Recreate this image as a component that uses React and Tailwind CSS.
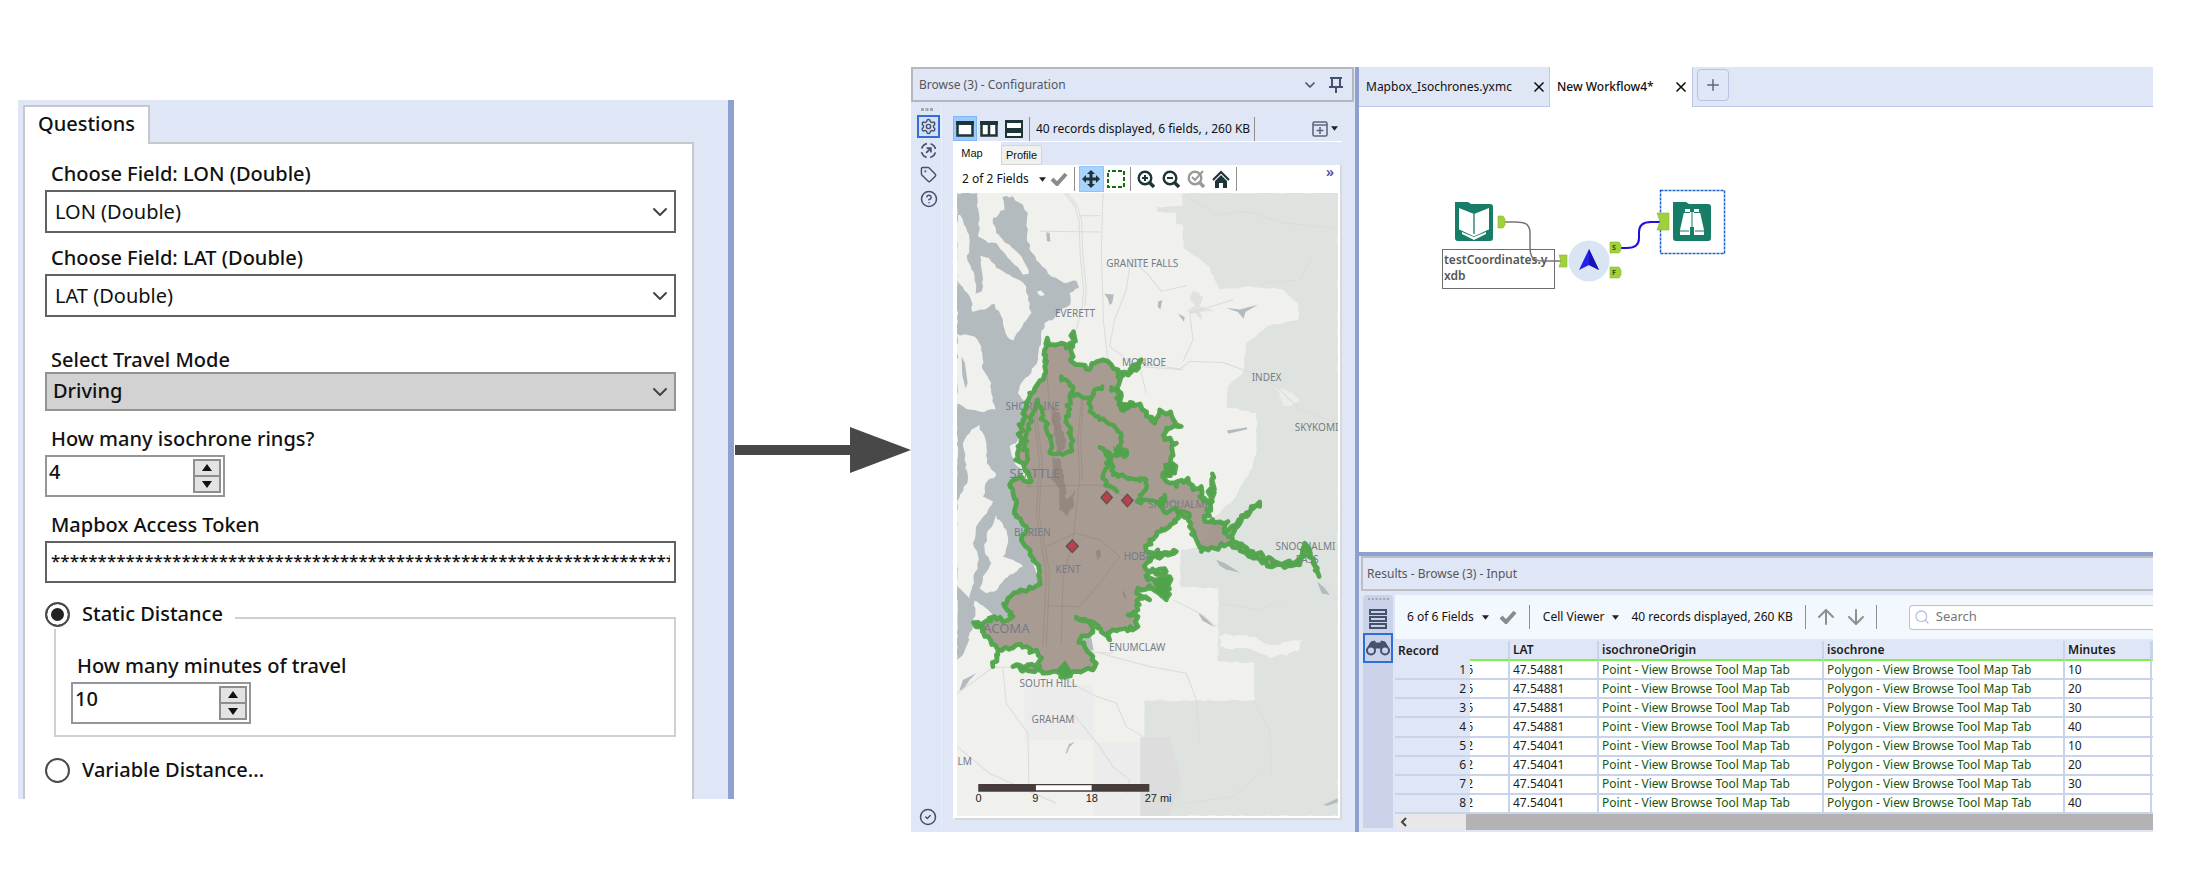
import React, { useState } from 'react'
import { ChevronDown, Settings, Tag, CircleHelp, CircleCheck, ArrowUp, ArrowDown, Search, Plus, X } from 'lucide-react'

const rows = [
  { rec: 1, clip: '6', lat: '47.54881', min: 10 },
  { rec: 2, clip: '6', lat: '47.54881', min: 20 },
  { rec: 3, clip: '6', lat: '47.54881', min: 30 },
  { rec: 4, clip: '6', lat: '47.54881', min: 40 },
  { rec: 5, clip: '2', lat: '47.54041', min: 10 },
  { rec: 6, clip: '2', lat: '47.54041', min: 20 },
  { rec: 7, clip: '2', lat: '47.54041', min: 30 },
  { rec: 8, clip: '2', lat: '47.54041', min: 40 },
]

// adds a repeatable wobble to a coarse outline so coasts and rings look ragged
function rough(str, amp = 5, step = 13, close = true){
  const pts = str.trim().split(/\s+/).map(p => p.split(',').map(Number))
  if (close) pts.push(pts[0])
  let seed = 7
  const rnd = () => {
    seed = (seed * 16807) % 2147483647
    return seed / 2147483647 - 0.5
  }
  let d = `M${pts[0][0]} ${pts[0][1]}`
  for (let i = 1; i < pts.length; i++){
    const [x0, y0] = pts[i - 1]
    const [x1, y1] = pts[i]
    const n = Math.max(1, Math.round(Math.hypot(x1 - x0, y1 - y0) / step))
    for (let k = 1; k <= n; k++){
      const t = k / n
      const a = k === n ? 0 : amp * 2
      d += `L${(x0 + (x1 - x0) * t + rnd() * a).toFixed(1)} ${(y0 + (y1 - y0) * t + rnd() * a).toFixed(1)}`
    }
  }
  return close ? d + 'Z' : d
}

const WATER = '172,40 232,40 232,80 240,120 235,170 265,190 290,190 325,235 355,262 370,285 388,282 370,240 330,195 290,160 280,115 315,90 308,52 340,50 370,75 385,100 383,160 390,210 420,250 455,290 500,310 530,303 538,325 510,340 512,375 480,395 465,415 435,430 425,480 415,540 395,580 365,610 355,640 385,680 375,740 355,780 330,800 345,850 370,880 335,905 330,930 350,975 350,1010 380,1040 365,1080 395,1130 410,1180 415,1215 375,1240 325,1255 312,1280 340,1310 310,1318 280,1305 245,1275 225,1262 228,1310 218,1350 190,1425 172,1440'
const ISLANDS = [
  '172,88 190,120 210,180 203,240 225,290 228,342 246,335 250,300 242,228 268,235 290,265 330,285 380,320 385,360 396,400 372,430 342,482 318,460 310,420 285,373 240,390 218,396 215,362 190,322 172,302',
  '172,462 225,470 245,500 250,570 275,610 275,640 288,690 240,695 200,688 172,670',
  '240,735 258,780 262,850 290,885 262,905 250,950 280,965 262,1000 230,1040 220,1090 238,1140 222,1200 210,1255 190,1235 172,1215 172,965 205,900 195,840 190,790 215,750',
  '290,1005 320,1050 325,1090 310,1130 340,1140 370,1160 330,1185 300,1215 285,1235 260,1240 240,1225 250,1190 275,1150 255,1110 262,1060',
  '412,335 425,332 436,346 424,349',
  '232,1262 280,1305 262,1330 222,1328',
]
const FOREST = '850,40 1315,40 1315,1908 722,1908 722,1672 733,1672 733,1562 1065,1562 1065,1448 955,1445 955,1225 843,1221 843,1110 905,1100 945,1010 1000,960 1050,875 1070,820 1070,700 980,682 985,620 1030,580 1040,490 1100,440 1195,420 1195,370 1150,330 1040,320 960,330 930,262 850,205 850,135 830,132 828,98 772,96 772,82 850,78'
const RING = '443,475 450,495 485,490 500,505 515,490 522,456 520,500 512,540 530,555 560,568 585,550 610,540 635,555 655,580 690,580 725,540 690,582 655,592 665,650 665,690 700,670 730,690 765,730 780,690 815,705 830,740 845,740 800,745 795,780 830,790 815,830 825,880 790,880 800,905 830,920 865,895 880,930 905,920 900,950 925,968 938,882 938,965 915,1025 985,1025 975,1060 1020,1018 1080,967 1025,1022 985,1070 1000,1085 1060,1115 1120,1150 1190,1145 1215,1090 1240,1140 1258,1190 1240,1145 1215,1105 1200,1155 1120,1160 1060,1135 990,1090 905,1115 890,1080 865,1015 835,1000 810,1040 750,1080 740,1115 790,1120 830,1115 770,1130 740,1150 740,1170 800,1175 745,1185 745,1200 810,1190 800,1260 760,1225 715,1225 720,1245 750,1260 720,1255 715,1290 685,1305 715,1310 715,1340 690,1350 625,1360 630,1380 585,1330 530,1312 575,1325 575,1360 540,1380 555,1400 590,1450 580,1470 540,1475 500,1490 460,1475 430,1480 340,1460 420,1460 420,1430 380,1400 350,1395 295,1410 280,1460 295,1410 265,1370 245,1340 222,1328 250,1330 285,1310 310,1325 340,1310 315,1280 325,1255 415,1215 410,1150 365,1080 380,1040 350,1005 350,960 330,915 365,890 395,905 370,850 348,840 355,800 370,720 390,640 430,600 435,560 435,510'
const INNER = [
  '485,590 520,620 510,650 500,720 515,770 515,815 490,825 450,820 455,770 430,720 415,660 400,700 375,800 380,850',
  '520,640 545,650 575,655 585,630 608,620',
  '575,655 570,695 600,720 640,735 665,770 655,800 682,825 635,828 600,802 632,840 612,880 617,915 652,935',
  '635,622 665,640 650,655 668,690',
  '635,835 640,885 690,895 740,900 732,935 712,965 760,962 800,1000 830,985 870,1010',
  '780,975 795,945 790,975',
]
const ROADS = [
  'M495 40L525 80L538 120L542 230L552 330L548 380L535 430L530 450',
  'M503 40L533 80L546 120L550 230L560 330L556 380',
  'M610 40L605 220L612 430L625 540',
  'M420 155L605 157', 'M538 108L603 108',
  'M692 235L745 285L785 335L860 318M692 250L680 330L645 420L630 500L690 545L840 568L870 545L970 548L1045 575L1130 620L1200 690L1315 730',
  'M860 50L950 105L1040 95L1150 130L1315 145', 'M1235 240L1200 300L1090 310',
  'M440 560L450 680L475 760', 'M545 660L535 780L540 900L520 1080L490 1200L485 1390',
  'M550 660L543 780L548 900', 'M400 680L420 850L410 1000L440 1180L430 1400',
  'M408 680L428 850L418 1000L450 1180L440 1400',
  'M380 920L600 915L700 960L850 970', 'M440 1100L530 1060L600 1080L660 1130L600 1210L540 1280L440 1278',
  'M172 1540L230 1500L280 1462L420 1462', 'M310 1465L320 1570L385 1660L388 1820',
  'M172 1700L270 1780L380 1830L470 1870', 'M500 1500L580 1545L650 1570L680 1640L730 1670',
  'M520 1600L600 1700L640 1760L690 1800L680 1840', 'M600 1420L750 1460L860 1480L890 1560L900 1700',
  'M820 1260L900 1300L950 1340', 'M1060 1560L1110 1650L1115 1780', 'M850 570L720 560L740 640',
  'M1000 360L870 400L880 480L850 545', 'M430 1400L520 1412L640 1420',
  'M960 1270L1080 1290L1150 1260', 'M1258 1195L1315 1260', 'M740 1800L860 1870L1000 1850L1080 1780',
]
const PLACES = [
  ['GRANITE FALLS', 620, 261, 30], ['EVERETT', 466, 411, 30], ['MONROE', 667, 560, 30],
  ['INDEX', 1056, 605, 30], ['SHORELINE', 318, 692, 30], ['SKYKOMI', 1185, 753, 30],
  ['SEATTLE', 330, 894, 39], ['SNOQUALMIE', 745, 986, 30], ['BURIEN', 343, 1068, 30],
  ['SNOQUALMI', 1127, 1111, 30], ['PASS', 1188, 1148, 30], ['HOBART', 672, 1140, 30],
  ['KENT', 468, 1179, 30], ['TACOMA', 232, 1358, 39], ['ENUMCLAW', 628, 1413, 30],
  ['SOUTH HILL', 360, 1522, 30], ['GRAHAM', 396, 1628, 30], ['LM', 174, 1755, 30],
]

function MapView(){
  return (
    <svg viewBox="172 40 1143 1868" preserveAspectRatio="xMidYMid slice" className="block w-full h-[623px] bg-[#f0f0ed]">
      <path d={rough(FOREST, 3, 14)} fill="#dfe3df" />
      <path d="M375 1515h207v165H375zM582 1685h141v223H582z" fill="#ececed" />
      <path d="M722 1672h90l15 70l20 60l-40 106H722z" fill="#dcdddc" />
      <path d={rough('955,1365 1040,1365 1110,1395 1210,1380 1195,1415 1110,1435 1060,1410 960,1400', 6, 12)} fill="#f0f0ed" />
      <path d={rough('1130,620 1180,640 1200,668 1150,680', 5, 10)} fill="#ecedea" />
      <path d={rough(WATER, 4, 12)} fill="#b3bbbf" />
      <path d={rough('172,680 215,700 245,695 290,700 240,740 205,765 190,790 172,740', 3, 12)} fill="#b3bbbf" />
      {ISLANDS.map(p => <path key={p} d={rough(p, 4, 12)} fill="#f0f0ed" />)}
      <g fill="#b3bbbf">
        <path d="M186 530l10 20l8 60l-6 16l-10-40zM614 342l28 2l-4 26l-8 6l-6-20zM440 158l10 2l2 26l-10-2zM980 385l40 4l55-14l-38 22l-5 20l-18-20zM776 365l12-4l-6 28l-8-8zM835 402l20 10l-2 14zM982 752l60-10v6l-56 14z" />
        <path d="M950 1140l26 10l44 28l-40-8l-20-12zM896 1300l18 8l30 34l-36-20zM1252 1205l24 20l14 20l-24-4zM498 1720l10-28l18-6l-16 14l-8 20zM1270 1875l44-20v12l-30 10zM190 1500l40-20l-20 20l-20 30l-10 0zM544 1370l30 0l8 40l-20 6l-18-20z" />
      </g>
      <path d={rough('880,330 910,350 900,380 940,390 900,400 905,420 880,400 860,395 885,380 870,355', 4, 8)} fill="#e0e2e1" />
      <g fill="none" stroke="#dadcdc" strokeWidth="3" strokeLinejoin="round">
        {ROADS.map(d => <path key={d} d={d} />)}
      </g>
      <path d={rough(RING, 8, 10)} fill="#9c8d82" fillOpacity="0.86" />
      <g fill="#82786f" opacity="0.5">
        <path d={rough('462,680 480,700 485,750 500,780 490,812 470,815 468,775 455,720', 4, 12)} />
        <path d={rough('458,830 480,835 490,880 500,960 525,930 520,985 500,1010 478,990 480,930 455,900', 4, 12)} />
        <path d="M588 1115l12-8l4 20l-10 14zM668 1230l8 10l4 20l-10-14z" />
      </g>
      <g fill="none" stroke="#85796f" strokeWidth="2" strokeLinejoin="round" opacity="0.4">
        {ROADS.slice(8, 15).map(d => <path key={d} d={d} />)}
      </g>
      <g fontFamily="'Noto Sans', sans-serif" fill="#747c87">
        {PLACES.map(([t, x, y, s]) => <text key={t + x} x={x} y={y} fontSize={s}>{t}</text>)}
      </g>
      <g fill="none" stroke="#4fa34a" strokeOpacity="0.95" strokeLinejoin="round" strokeLinecap="round">
        <path d={rough(RING, 8, 10)} strokeWidth="14" />
        {INNER.map(p => <path key={p} d={rough(p, 7, 9, false)} strokeWidth="13" />)}
      </g>
      <g fill="#4fa34a">
        <path d="M755 1200l55-10l-8 66l-20-8zM640 800l44 22l-36 14zM790 850l34-4l4 36l-34 4zM655 665l60 6l-45 30zM470 1470l26-28l22 32l-22 20z" />
      </g>
      <g fill="#b9414d" stroke="#5c5250" strokeWidth="4">
        <path d="M621 934l17 19l-17 19l-17-19z" />
        <path d="M683 943l17 19l-17 19l-17-19z" />
        <path d="M518 1080l18 19l-18 19l-18-19z" />
      </g>
      <path d="M236 1812h513v23H236z" fill="#463c3b" />
      <path d="M409 1816h167v15H409z" fill="#fff" />
      <g fontFamily="'Liberation Sans', sans-serif" fontSize="33" fill="#222">
        <text x="228" y="1866">0</text>
        <text x="398" y="1866">9</text>
        <text x="558" y="1866">18</text>
        <text x="735" y="1866">27 mi</text>
      </g>
    </svg>
  )
}

function Field({ id, label, options, className, boxClass }){
  return (
    <div className={className}>
      <label htmlFor={id} className="block pl-1.5 leading-6">{label}</label>
      <div className="relative">
        <select id={id} className={boxClass}>
          {options.map(o => <option key={o}>{o}</option>)}
        </select>
        <ChevronDown className="absolute right-1 top-1/2 -translate-y-1/2 size-6 text-[#444] pointer-events-none" strokeWidth={2} />
      </div>
    </div>
  )
}

function Stepper({ id, label, value, onChange }){
  return (
    <div>
      <label htmlFor={id} className="block pl-1.5 pb-1 leading-6">{label}</label>
      <div className="flex w-[180px] h-[42px] border-2 border-[#94969b] bg-white p-0.5 pl-0">
        <input id={id} type="number" value={value} onChange={e=>onChange(Number(e.target.value))} className="min-w-0 flex-1 pl-0.5 pb-2 outline-none [appearance:textfield] [&::-webkit-inner-spin-button]:appearance-none" />
        <div className="w-7 flex flex-col border-2 border-[#8e8e8e] bg-[#8e8e8e] gap-0.5">
          <button aria-label="Increase" onClick={()=>onChange(value + 1)} className="flex-1 flex items-center justify-center bg-[#e3e3e3]">
            <svg viewBox="0 0 12 8" className="w-3 h-2"><path d="M6 0l5 7H1z" fill="#111" /></svg>
          </button>
          <button aria-label="Decrease" onClick={()=>onChange(value - 1)} className="flex-1 flex items-center justify-center bg-[#e3e3e3]">
            <svg viewBox="0 0 12 8" className="w-3 h-2"><path d="M6 8l5-7H1z" fill="#111" /></svg>
          </button>
        </div>
      </div>
    </div>
  )
}

const radio = 'appearance-none shrink-0 size-[25px] rounded-full border-2 border-[#4a4a4a] bg-white checked:bg-[#222] checked:shadow-[inset_0_0_0_4px_#fff]'

function Questions(){
  const [rings, setRings] = useState(4)
  const [minutes, setMinutes] = useState(10)
  const [mode, setMode] = useState('static')

  return (
    <section className="min-w-0 mt-[100px] h-[699px] bg-[#dfe6f5] border-r-[6px] border-[#8f9fd0] pl-[5px] pr-[34px] pt-[5px] flex flex-col text-[20px] font-medium text-[#111]">
      <div className="relative z-10 flex">
        <button className="w-[127px] h-[39px] -mb-0.5 bg-white border-2 border-b-0 border-[#c6c8cb] pb-1">Questions</button>
      </div>
      <div className="flex-1 bg-white border-2 border-b-0 border-[#c6c8cb] px-5 pt-[18px] pr-4">
        <Field id="lon" label="Choose Field: LON (Double)" options={['LON (Double)']} boxClass="block w-full h-[43px] mt-1 appearance-none border-2 border-[#626262] bg-white px-2 font-normal" />
        <Field id="lat" label="Choose Field: LAT (Double)" options={['LAT (Double)']} className="mt-[13px]" boxClass="block w-full h-[43px] mt-1 appearance-none border-2 border-[#626262] bg-white px-2 font-normal" />
        <Field id="travel" label="Select Travel Mode" options={['Driving', 'Walking', 'Cycling']} className="mt-[31px]" boxClass="block w-full h-[39px] appearance-none border-2 border-[#939393] bg-[#d2d2d2] px-1.5 pb-0.5" />
        <div className="mt-4">
          <Stepper id="rings" label="How many isochrone rings?" value={rings} onChange={setRings} />
        </div>
        <div className="mt-4">
          <label htmlFor="token" className="block pl-1.5 pb-1 leading-6">Mapbox Access Token</label>
          <input id="token" readOnly value={'*'.repeat(120)} className="block w-full h-[42px] border-2 border-[#626262] px-1 pb-1 text-[17px] outline-none" />
        </div>
        <div className="mt-4">
          <div className="relative z-10 flex items-center gap-1">
            <label className="flex items-center gap-3 bg-white pr-3">
              <input type="radio" name="distance" checked={mode === 'static'} onChange={()=>setMode('static')} className={radio} />
              Static Distance
            </label>
          </div>
          <div className="ml-[9px] -mt-3 h-[120px] border-2 border-[#d0d0d0] pl-[15px] pt-[35px]">
            <Stepper id="minutes" label="How many minutes of travel" value={minutes} onChange={setMinutes} />
          </div>
          <label className="mt-[18px] flex items-center gap-3">
            <input type="radio" name="distance" checked={mode === 'variable'} onChange={()=>setMode('variable')} className={radio} />
            Variable Distance...
          </label>
        </div>
      </div>
    </section>
  )
}

function Caret(){
  return <svg viewBox="0 0 8 5" className="w-[7px] h-[5px] shrink-0"><path d="M0 0h8L4 5z" fill="#222" /></svg>
}

function Tick({ className }){
  return <svg viewBox="0 0 18 14" className={className}><path d="M2 7l5 5L16 2" fill="none" stroke="#8b8b8b" strokeWidth="4" /></svg>
}

function Rule({ className = '' }){
  return <span className={`w-px h-6 bg-[#8f8f8f] shrink-0 ${className}`} />
}

function Zoom({ children, color = '#1d3537' }){
  return (
    <svg viewBox="0 0 18 18" className="size-[18px]" fill="none" stroke={color} strokeWidth="2.4">
      <circle cx="8" cy="8" r="6.3" />
      <path d="M12.5 12.5L17 17" strokeWidth="3.4" />
      {children}
    </svg>
  )
}

function Configuration(){
  return (
    <div className="w-[448px] shrink-0 flex flex-col bg-[#dfe6f5] border-r-4 border-[#8f9fd0]">
      <header className="h-[35px] flex items-center mr-px pl-1.5 pr-2 border-2 border-[#b5b7bb]">
        <h2 className="flex-1 text-[12px] text-[#55575c]">Browse (3) - Configuration</h2>
        <button aria-label="Collapse" className="text-[#46506f]"><ChevronDown className="size-4" strokeWidth={2.5} /></button>
        <button aria-label="Pin" className="ml-2.5">
          <svg viewBox="0 0 16 18" className="w-4 h-[18px]" fill="none" stroke="#46506f" strokeWidth="2"><path d="M2 2h12M4 2v8M12 2v8M1 11h14M8 11v6" /></svg>
        </button>
      </header>
      <div className="flex-1 flex">
        <nav className="w-[31px] mt-1 mb-1 border-r border-[#e9eefa] flex flex-col items-end text-[#46506f]">
          <svg viewBox="0 0 12 3" className="w-3 h-[3px] mt-0.5 mr-2 fill-[#a3a7ae]"><path d="M0 0h3v3H0zM4.500 0h3v3h-3zM9 0h3v3H9z" /></svg>
          <div className="mt-1 mr-px flex flex-col items-center gap-px">
            <button aria-label="Configuration" className="size-[23px] grid place-items-center border-2 border-[#2f6fd6] bg-[#d3e0f6]"><Settings className="size-[17px]" /></button>
            <button aria-label="Navigation" className="size-[23px] grid place-items-center">
              <svg viewBox="0 0 18 18" className="size-[17px]" fill="none" stroke="#46506f" strokeWidth="1.800"><circle cx="9" cy="9" r="7.500" strokeDasharray="7.800 4" strokeDashoffset="-2" /><path d="M6.500 11.500l4.500-4.500M7 6.500h4.500V11" /></svg>
            </button>
            <button aria-label="Annotation" className="size-[23px] grid place-items-center"><Tag className="size-[17px]" /></button>
            <button aria-label="Help" className="size-[23px] grid place-items-center"><CircleHelp className="size-[18px]" /></button>
          </div>
          <button aria-label="Status" className="mt-auto mr-0.5 size-[22px] grid place-items-center"><CircleCheck className="size-[18px]" /></button>
        </nav>
        <div className="flex-1 min-w-0 ml-[11px] mr-[13px] mt-3.5 mb-3 flex flex-col">
          <div className="h-[26px] flex items-center border-b border-white text-[12px] text-[#111]">
            <button aria-label="Single pane" className="w-6 h-[25px] grid place-items-center bg-[#9ccaff] border border-[#82b7f3]">
              <svg viewBox="0 0 18 16" className="w-[18px] h-4"><path d="M1.500 2h15v12.500h-15z" fill="#fff" stroke="#1d3537" strokeWidth="2.500" /><path d="M0 0h18v4H0z" fill="#1d3537" /></svg>
            </button>
            <button aria-label="Two columns" className="ml-[3px]">
              <svg viewBox="0 0 18 16" className="w-[18px] h-4"><path d="M1.500 2h15v12.500h-15zM9 2v12" fill="#fff" stroke="#1d3537" strokeWidth="2.500" /><path d="M0 0h18v4H0z" fill="#1d3537" /></svg>
            </button>
            <button aria-label="Two rows" className="ml-[7px]">
              <svg viewBox="0 0 18 18" className="size-[18px]"><path d="M1 1h16v16H1z" fill="#fff" stroke="#1d3537" strokeWidth="2" /><path d="M0 0h18v3H0zM0 8h18v5H0z" fill="#1d3537" /></svg>
            </button>
            <Rule className="ml-1.5" />
            <span className="ml-1.5 whitespace-nowrap">40 records displayed, 6 fields, , 260 KB</span>
            <Rule className="ml-1" />
            <button aria-label="New window" className="ml-auto mr-1 flex items-center gap-[3px]">
              <svg viewBox="0 0 16 16" className="size-4" fill="none" stroke="#5d667e" strokeWidth="1.600"><rect x="1" y="1" width="14" height="14" rx="1.500" /><path d="M1 4h14M8 6v7M4.500 9.500h7" /></svg>
              <Caret />
            </button>
          </div>
          <div className="flex items-end text-[11px] text-[#111] font-['Liberation_Sans',sans-serif]">
            <button className="w-12 h-[23px] bg-white pr-2.5">Map</button>
            <button className="w-[41px] h-5 bg-[#f0f0ee] border border-[#d5d5d3]">Profile</button>
          </div>
          <div className="bg-white border-2 border-t-0 border-[#d8d9da] border-l-white p-0.5 pt-0 flex flex-col">
            <div className="h-7 flex items-center text-[12px] text-[#111]">
              <button className="ml-[5px] flex items-center gap-2.5 whitespace-nowrap">2 of 2 Fields <Caret /></button>
              <Tick className="w-[18px] h-3.5 ml-1" />
              <Rule className="ml-1.5" />
              <button aria-label="Pan" className="ml-1 w-[25px] h-[26px] grid place-items-center bg-[#a9d3ff] border border-[#8fc2f6]">
                <svg viewBox="0 0 18 18" className="size-[18px]"><path d="M9 0l4 4h-2.500v3.500H14V5l4 4-4 4v-2.500h-3.500V14H13l-4 4-4-4h2.500v-3.500H4V13L0 9l4-4v2.500h3.500V4H5z" fill="#1d3537" /></svg>
              </button>
              <button aria-label="Select area" className="ml-[3px]">
                <svg viewBox="0 0 18 18" className="size-[18px]"><path d="M1 1h16v16H1z" fill="none" stroke="#13700f" strokeWidth="2" strokeDasharray="4 2" strokeDashoffset="2" /></svg>
              </button>
              <Rule className="ml-[5px]" />
              <div className="ml-1.5 flex items-center gap-[7px]">
                <button aria-label="Zoom in"><Zoom><path d="M5 8h6M8 5v6" strokeWidth="2" /></Zoom></button>
                <button aria-label="Zoom out"><Zoom><path d="M5 8h6" strokeWidth="2" /></Zoom></button>
                <button aria-label="Zoom to selection"><Zoom color="#9a9a9a"><path d="M5 7l3 3 8-9" strokeWidth="2" /></Zoom></button>
                <button aria-label="Home">
                  <svg viewBox="0 0 18 18" className="size-[18px]"><path d="M1 10L9 2l8 8" fill="none" stroke="#1d3537" strokeWidth="2.200" /><path d="M3 11l6-6 6 6v7h-4v-5H7v5H3z" fill="#1d3537" /></svg>
                </button>
              </div>
              <Rule className="ml-1.5" />
              <button aria-label="More" className="ml-auto mr-1 mb-4 text-[15px] leading-3 font-medium text-[#3e3a9a]">»</button>
            </div>
            <MapView />
          </div>
        </div>
      </div>
    </div>
  )
}

function Canvas(){
  return (
    <div className="relative h-[445px] bg-white overflow-hidden">
      <div className="absolute left-[83px] top-[142px] w-[113px] h-10 border border-[#6e6e6e] bg-white px-px text-[12px] leading-4 pt-0.5 font-semibold text-[#555]">testCoordinates.y<br />xdb</div>
      {/* wires, anchors and tools share one drawing so they stay connected */}
      <svg viewBox="0 0 300 110" className="absolute left-[78px] top-[79px] w-[300px] h-[110px]">
        <path d="M66 36h12c12 0 15 3 15 12v14c0 10 4 13 14 13h18" fill="none" stroke="#757575" strokeWidth="1.500" />
        <path d="M181 62h9c8 0 12-3 12-10v-6c0-7 4-10 12-10h10" fill="none" stroke="#1d10e0" strokeWidth="2" />
        <path d="M223.500 4.500h64v63h-64z" fill="none" stroke="#1c62c9" strokeWidth="1.500" strokeDasharray="3 1" />
        <g fill="#177d66">
          <path d="M18 16h13l3 2h19a3 3 0 0 1 3 3v31a3 3 0 0 1-3 3H21a3 3 0 0 1-3-3z" />
          <path d="M236 16h13l3 2h19a3 3 0 0 1 3 3v31a3 3 0 0 1-3 3h-32a3 3 0 0 1-3-3z" />
        </g>
        <path d="M22 22l15 6 15-6v22l-15 7-15-7z" fill="#fff" />
        <path d="M37 28v20M22 44l15 7 15-7" fill="none" stroke="#177d66" strokeWidth="1.300" />
        <path d="M25 48l12 6 12-6v-2l-12 5-12-5z" fill="#fff" />
        <path d="M248 23h5v3h4v-3h5v3h1l4 18v5h-10v-8h-4v8h-10v-5l4-18h1z" fill="#fff" />
        <path d="M243 45h9M258 45h9M247 26.500h6M257 26.500h6M255 26v15" stroke="#177d66" strokeWidth="1" />
        <g fill="#a0d13c" stroke="#8ab52f" strokeWidth="0.600">
          <path d="M61 30h5l2 3v6l-2 3h-5z" />
          <path d="M122 69h8v12h-8l2-6z" />
          <path d="M220 27h12v17h-12l3-8.500z" />
          <path d="M173 56h9l2 3v5l-2 3h-9z" />
          <path d="M173 81h9l2 3v5l-2 3h-9z" />
        </g>
        <circle cx="152" cy="75" r="20.500" fill="#d9e5f3" />
        <path d="M152 63l10 21-10-5-10 5z" fill="#2222ee" />
        <path d="M152 63l10 21-10-5z" fill="#1a14b4" />
        <g fontFamily="'Noto Sans', sans-serif" fontWeight="700" fontSize="7" fill="#2d4a12">
          <text x="175" y="64">S</text>
          <text x="175" y="89">F</text>
        </g>
      </svg>
    </div>
  )
}

function Results(){
  const th = 'text-left pl-[3px] font-semibold border-r-2 border-[#c9d3ea] border-b-2 border-b-[#7ef04e]'
  const td = 'bg-white pl-[3px] border-r-2 border-b-2 border-[#c9d3ea] whitespace-nowrap'
  return (
    <div className="flex-1 flex flex-col bg-[#dfe6f5] border-t-4 border-[#8f9fd0] pl-1">
      <header className="-ml-0.5 h-[35px] flex items-center pl-1 border-2 border-r-0 border-[#bcbec3]">
        <h2 className="text-[12px] text-[#55575c]">Results - Browse (3) - Input</h2>
      </header>
      <div className="mt-1 flex-1 flex min-w-0">
        <nav className="w-[30px] shrink-0 mb-1 bg-[#cad3e9] rounded-t flex flex-col items-center">
          <svg viewBox="0 0 21 3" className="w-[21px] h-[3px] mt-[3px] fill-[#a3a7ae]"><path d="M0 0h2v2H0zM3.800 0h2v2h-2zM7.600 0h2v2h-2zM11.400 0h2v2h-2zM15.200 0h2v2h-2zM19 0h2v2h-2z" /></svg>
          <button aria-label="Messages" className="mt-2">
            <svg viewBox="0 0 18 20" className="w-[18px] h-5" fill="none" stroke="#46506f" strokeWidth="2"><path d="M1 1h16v4H1zM1 8h16v4H1zM1 15h16v4H1z" /></svg>
          </button>
          <button aria-label="Data" className="mt-1 w-[30px] h-[30px] grid place-items-center border-2 border-[#2f6fd6]">
            <svg viewBox="0 0 24 16" className="w-6 h-4" fill="#46506f" stroke="#46506f" strokeWidth="2"><path d="M2 7l3-5 4-1v2h6V1l4 1 3 5-4 3-4-2h-4l-4 2z" strokeWidth="1" /><circle cx="5" cy="10.500" r="4" fill="#cad3e9" /><circle cx="19" cy="10.500" r="4" fill="#cad3e9" /></svg>
          </button>
        </nav>
        <div className="flex-1 min-w-0 ml-0.5 overflow-hidden flex flex-col">
          <div className="h-11 flex items-center bg-[#f3f7fe] pl-3 text-[12px] text-[#111] whitespace-nowrap overflow-hidden">
            <button className="flex items-center gap-2">6 of 6 Fields <Caret /></button>
            <Tick className="w-[18px] h-3.5 ml-2.5 shrink-0" />
            <Rule className="ml-3" />
            <button className="ml-[13px] flex items-center gap-2">Cell Viewer <Caret /></button>
            <span className="ml-3">40 records displayed, 260 KB</span>
            <Rule className="ml-3" />
            <button aria-label="Previous" className="ml-2 text-[#8f8f8f]"><ArrowUp className="size-6" /></button>
            <button aria-label="Next" className="ml-1.5 text-[#8f8f8f]"><ArrowDown className="size-6" /></button>
            <Rule className="ml-2" />
            <label className="ml-8 flex-1 min-w-0 h-[25px] flex items-center bg-white border border-r-0 border-[#b5c1e2] rounded-l pl-1 gap-1.5">
              <Search className="size-4 text-[#b5c1e2]" />
              <input aria-label="Search" placeholder="Search" className="flex-1 min-w-0 outline-none placeholder:text-[#777] text-[13px]" />
            </label>
          </div>
          <table className="mt-0.5 w-full h-[173px] table-fixed border-separate border-spacing-0 text-[12px] leading-4 text-[#1c1c22]">
            <colgroup>
              <col className="w-[75px]" /><col className="w-10" /><col className="w-[89px]" /><col className="w-[225px]" /><col className="w-[241px]" /><col className="w-[87px]" /><col />
            </colgroup>
            <thead>
              <tr className="h-[20px]">
                <th className="text-left pl-[3px] font-semibold">Record</th>
                <th className={th}></th>
                <th className={th}>LAT</th>
                <th className={th}>isochroneOrigin</th>
                <th className={th}>isochrone</th>
                <th className={th}>Minutes</th>
                <th className={th}></th>
              </tr>
            </thead>
            <tbody>
              {rows.map(r => (
                <tr key={r.rec}>
                  <td className="text-right pr-1 border-b-2 border-[#c9d3ea]">{r.rec}</td>
                  <td className="bg-white border-r-2 border-b-2 border-[#c9d3ea]"><span className="flex w-[3px] overflow-hidden justify-end">{r.clip}</span></td>
                  <td className={td}>{r.lat}</td>
                  <td className={`${td} text-[#17560f]`}>Point - View Browse Tool Map Tab</td>
                  <td className={`${td} text-[#17560f]`}>Polygon - View Browse Tool Map Tab</td>
                  <td className={td}>{r.min}</td>
                  <td className="bg-white border-b-2 border-[#c9d3ea]"></td>
                </tr>
              ))}
            </tbody>
          </table>
          <div className="h-4 flex bg-[#b3b3b3]">
            <button aria-label="Scroll left" className="w-[71px] bg-[#e8e8e8] pl-1">
              <svg viewBox="0 0 10 10" className="size-2.5"><path d="M7 1L3 5l4 4" fill="none" stroke="#444" strokeWidth="2" /></svg>
            </button>
          </div>
        </div>
      </div>
    </div>
  )
}

export default function App(){
  return (
    <main className="min-h-screen grid grid-cols-[716fr_177fr_1242fr] items-start bg-white pl-[18px] pr-[51px] font-['Noto_Sans','Open_Sans',sans-serif]">
      <Questions />
      <svg viewBox="0 0 177 46" className="w-full mt-[427px]">
        <path d="M1 18h115V0l61 23-61 23V28H1z" fill="#484848" />
      </svg>
      <div className="min-w-0 mt-[67px] h-[765px] flex">
        <Configuration />
        <div className="flex-1 min-w-0 flex flex-col">
          <div className="h-10 flex bg-[#dfe6f5] text-[12px] text-[#111]">
            <div className="w-[191px] flex items-center justify-between pl-[7px] pr-0.5 border-r border-b border-[#bcc8e6]">
              <button>Mapbox_Isochrones.yxmc</button>
              <button aria-label="Close Mapbox_Isochrones.yxmc"><X className="size-4" strokeWidth={2.5} /></button>
            </div>
            <div className="w-[142px] flex items-center justify-between pl-[7px] pr-[3px] bg-white">
              <button className="font-medium">New Workflow4*</button>
              <button aria-label="Close New Workflow4"><X className="size-4" strokeWidth={2.5} /></button>
            </div>
            <div className="flex-1 pl-1 pt-0.5 border-l border-b border-[#bcc8e6]">
              <button aria-label="New workflow" className="w-8 h-8 grid place-items-center border border-[#b9c4e2] rounded text-[#5d667e]"><Plus className="size-[18px]" /></button>
            </div>
          </div>
          <Canvas />
          <Results />
        </div>
      </div>
    </main>
  )
}
